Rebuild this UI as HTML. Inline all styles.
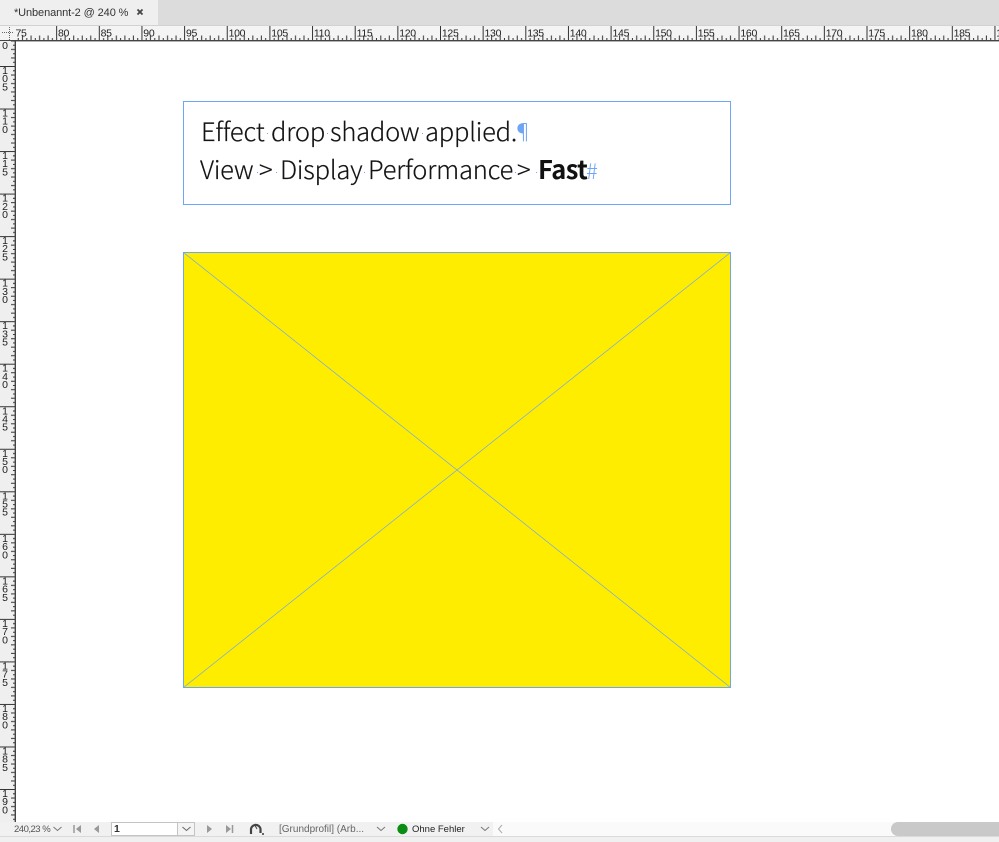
<!DOCTYPE html>
<html lang="de"><head><meta charset="utf-8"><title>Unbenannt-2</title>
<style>
html,body{margin:0;padding:0;background:#fff}
body{width:999px;height:842px;overflow:hidden;position:relative;font-family:"Liberation Sans",sans-serif}
.a{position:absolute}
.w{position:absolute;font-family:"Noto Sans CJK JP","Liberation Sans",sans-serif;font-size:25.5px;letter-spacing:-.2px;line-height:34px;color:#141414;white-space:nowrap;font-weight:300;-webkit-text-stroke:.2px #141414}
.l1{top:114px}.l2{top:152px}
.d{position:absolute;width:1.4px;height:1.4px;background:#6ea6f5}
.frame{position:absolute;box-sizing:border-box;border:1px solid #6ea6f5}
</style></head><body>

<!-- tab bar -->
<div class="a" style="left:0;top:0;width:999px;height:26px;background:#dcdcdc"></div>
<div class="a" style="left:0;top:0;width:158px;height:25px;background:#efefef"></div>
<div class="a" style="left:0;top:25px;width:999px;height:1px;background:#d2d2d2"></div>
<div class="a" style="left:14px;top:6px;font-size:11px;line-height:14px;color:#333;white-space:nowrap;letter-spacing:-.1px;font-family:'Liberation Sans',sans-serif">*Unbenannt-2 @ 240 %</div>
<svg class="a" style="left:136px;top:8px" width="9" height="9"><path d="M1.5 1.5L6.5 6.5M6.5 1.5L1.5 6.5" stroke="#444" stroke-width="1.8"/></svg>

<!-- rulers -->
<svg class="a" style="left:0;top:26px" width="999" height="16" font-family="Liberation Sans, sans-serif" font-size="10.5" letter-spacing="-.3" fill="#222">
<defs><pattern id="hr" patternUnits="userSpaceOnUse" x="13.5" y="0" width="42.65" height="16">
<path d="M.5 0V14M4.76 12V14M9 9.5V14M13.3 12V14M17.56 9.5V14M21.8 12V14M26.1 9.5V14M30.4 12V14M34.6 9.5V14M38.9 12V14" stroke="#333" fill="none"/></pattern></defs>
<rect width="999" height="15" fill="#f4f4f4"/>
<rect x="16" width="983" height="15" fill="url(#hr)"/>
<rect y="14" width="999" height="1.4" fill="#444"/>
<text x="15.5" y="10.5">75</text><text x="58" y="10.5">80</text><text x="100.6" y="10.5">85</text><text x="143.3" y="10.5">90</text><text x="186" y="10.5">95</text><text x="228.6" y="10.5">100</text><text x="271.3" y="10.5">105</text><text x="313.9" y="10.5">110</text><text x="356.6" y="10.5">115</text><text x="399.2" y="10.5">120</text><text x="441.9" y="10.5">125</text><text x="484.5" y="10.5">130</text><text x="527.2" y="10.5">135</text><text x="569.8" y="10.5">140</text><text x="612.5" y="10.5">145</text><text x="655.1" y="10.5">150</text><text x="697.8" y="10.5">155</text><text x="740.4" y="10.5">160</text><text x="783" y="10.5">165</text><text x="825.7" y="10.5">170</text><text x="868.3" y="10.5">175</text><text x="911" y="10.5">180</text><text x="953.6" y="10.5">185</text><text x="996.3" y="10.5">190</text>
</svg>

<svg class="a" style="left:0;top:41px" width="16" height="781" font-family="Liberation Sans, sans-serif" font-size="10.5" fill="#222" text-anchor="middle">
<defs><pattern id="vr" patternUnits="userSpaceOnUse" x="0" y="25" width="16" height="42.53">
<path d="M0 .5H15M13 4.76H15M11 9H15M13 13.3H15M11 17.5H15M13 21.8H15M11 26H15M13 30.3H15M11 34.5H15M13 38.8H15" stroke="#333" fill="none"/></pattern></defs>
<rect width="15" height="781" fill="#efefef"/>
<rect width="16" height="781" fill="url(#vr)"/>
<rect x="14.6" width="1.4" height="781" fill="#444"/>
<text x="5" y="8">0</text>
<text x="5" y="33">1<tspan x="5" dy="8.2">0</tspan><tspan x="5" dy="8.2">5</tspan></text>
<text x="5" y="75.5">1<tspan x="5" dy="8.2">1</tspan><tspan x="5" dy="8.2">0</tspan></text>
<text x="5" y="118">1<tspan x="5" dy="8.2">1</tspan><tspan x="5" dy="8.2">5</tspan></text>
<text x="5" y="160.6">1<tspan x="5" dy="8.2">2</tspan><tspan x="5" dy="8.2">0</tspan></text>
<text x="5" y="203">1<tspan x="5" dy="8.2">2</tspan><tspan x="5" dy="8.2">5</tspan></text>
<text x="5" y="245.7">1<tspan x="5" dy="8.2">3</tspan><tspan x="5" dy="8.2">0</tspan></text>
<text x="5" y="288.2">1<tspan x="5" dy="8.2">3</tspan><tspan x="5" dy="8.2">5</tspan></text>
<text x="5" y="330.7">1<tspan x="5" dy="8.2">4</tspan><tspan x="5" dy="8.2">0</tspan></text>
<text x="5" y="373.3">1<tspan x="5" dy="8.2">4</tspan><tspan x="5" dy="8.2">5</tspan></text>
<text x="5" y="415.8">1<tspan x="5" dy="8.2">5</tspan><tspan x="5" dy="8.2">0</tspan></text>
<text x="5" y="458.3">1<tspan x="5" dy="8.2">5</tspan><tspan x="5" dy="8.2">5</tspan></text>
<text x="5" y="500.9">1<tspan x="5" dy="8.2">6</tspan><tspan x="5" dy="8.2">0</tspan></text>
<text x="5" y="543.4">1<tspan x="5" dy="8.2">6</tspan><tspan x="5" dy="8.2">5</tspan></text>
<text x="5" y="585.9">1<tspan x="5" dy="8.2">7</tspan><tspan x="5" dy="8.2">0</tspan></text>
<text x="5" y="628.5">1<tspan x="5" dy="8.2">7</tspan><tspan x="5" dy="8.2">5</tspan></text>
<text x="5" y="671">1<tspan x="5" dy="8.2">8</tspan><tspan x="5" dy="8.2">0</tspan></text>
<text x="5" y="713.5">1<tspan x="5" dy="8.2">8</tspan><tspan x="5" dy="8.2">5</tspan></text>
<text x="5" y="756">1<tspan x="5" dy="8.2">9</tspan><tspan x="5" dy="8.2">0</tspan></text>
</svg>

<!-- corner -->
<div class="a" style="left:0;top:26px;width:15px;height:14px;background:#f4f4f4"></div>
<svg class="a" style="left:2px;top:27px" width="13" height="13"><path d="M0 5.5H12M7.5 0V13" stroke="#666" stroke-dasharray="1 1" fill="none"/></svg>
<div class="a" style="left:0;top:40px;width:16px;height:1.4px;background:#444"></div>

<!-- text frame -->
<div class="frame" style="left:183px;top:101px;width:548px;height:104px"></div>
<span class="w l1" style="left:201px">Effect</span>
<span class="w l1" style="left:271px">drop</span>
<span class="w l1" style="left:330px">shadow</span>
<span class="w l1" style="left:425px">applied.</span>
<span class="w l1" style="left:512px;color:#6ea6f5;-webkit-text-stroke:0;font-size:22px;letter-spacing:0">¶</span>
<span class="w l2" style="left:200px">View</span>
<span class="w l2" style="left:259px">&gt;</span>
<span class="w l2" style="left:280px">Display</span>
<span class="w l2" style="left:368px">Performance</span>
<span class="w l2" style="left:517px">&gt;</span>
<span class="w l2" style="left:538px;font-weight:700;color:#111;letter-spacing:-.6px;-webkit-text-stroke:0">Fast</span>
<span class="w l2" style="left:586px;top:153px;color:#6ea6f5;-webkit-text-stroke:0;font-size:22px;letter-spacing:0">#</span>
<i class="d" style="left:267px;top:133px"></i><i class="d" style="left:327px;top:133px"></i><i class="d" style="left:421.6px;top:133px"></i>
<i class="d" style="left:257px;top:172px"></i><i class="d" style="left:276px;top:172px"></i><i class="d" style="left:364px;top:172px"></i><i class="d" style="left:515px;top:172px"></i><i class="d" style="left:536px;top:172px"></i>

<!-- yellow frame -->
<svg class="a" style="left:183px;top:252px" width="548" height="436">
<rect x=".5" y=".5" width="547" height="435" fill="#ffed00" stroke="#6ea6f5"/>
<path d="M.5 .5L547.5 435.5M547.5 .5L.5 435.5" stroke="#6ea6f5" fill="none" stroke-width=".7"/>
</svg>

<!-- status bar -->
<div class="a" style="left:0;top:822px;width:999px;height:14px;background:#fafafa"></div>
<div class="a" style="left:0;top:822px;width:493px;height:14px;background:#f1f1f1"></div>
<div class="a" style="left:0;top:836px;width:999px;height:1px;background:#dadada"></div>
<div class="a" style="left:0;top:837px;width:999px;height:5px;background:#f0f0f0"></div>
<div class="a" style="left:14px;top:823px;font-size:9.5px;line-height:13px;color:#555;white-space:nowrap;letter-spacing:-.5px">240,23 %</div>
<div class="a" style="left:111px;top:822px;width:67px;height:14px;box-sizing:border-box;background:#fff;border:1px solid #c4c4c4"></div>
<div class="a" style="left:178px;top:822px;width:17px;height:14px;box-sizing:border-box;background:#f4f4f4;border:1px solid #c4c4c4;border-left:0"></div>
<div class="a" style="left:114px;top:823px;font-size:10.5px;line-height:13px;font-weight:bold;color:#333">1</div>
<svg class="a" style="left:0;top:820px" width="510" height="18" fill="none">
<path d="M53.5 7L57.500 10.500L61.500 7" stroke="#777"/>
<path d="M74 5V13" stroke="#999" stroke-width="1.5"/><path d="M81 5V13L76 9Z" fill="#999"/>
<path d="M99 5V13L94 9Z" fill="#999"/>
<path d="M182.500 7L186.500 10.500L190.500 7" stroke="#666"/>
<path d="M207 5V13L212 9Z" fill="#999"/>
<path d="M226 5V13L231 9Z" fill="#999"/><path d="M232.500 5V13" stroke="#999" stroke-width="1.500"/>
<path d="M251 14V9A4.800 4.800 0 0 1 260.500 9V13" stroke="#444" stroke-width="2.200"/>
<path d="M255 5.500L257 9" stroke="#444"/><rect x="262" y="13" width="2" height="2" fill="#666"/>
<path d="M377 7L381 10.500L385 7" stroke="#777"/>
<circle cx="402.500" cy="9" r="5.200" fill="#0b8c12"/>
<path d="M481 7L485 10.500L489 7" stroke="#777"/>
<path d="M502 5L498.500 9L502 13" stroke="#aaa"/>
</svg>
<div class="a" style="left:279px;top:823px;font-size:10px;line-height:13px;color:#666;white-space:nowrap">[Grundprofil] (Arb...</div>
<div class="a" style="left:412px;top:823px;font-size:9.500px;line-height:13px;color:#222;white-space:nowrap">Ohne Fehler</div>
<div class="a" style="left:891px;top:822px;width:120px;height:14px;border-radius:7px;background:#c9c9c9"></div>
</body></html>
